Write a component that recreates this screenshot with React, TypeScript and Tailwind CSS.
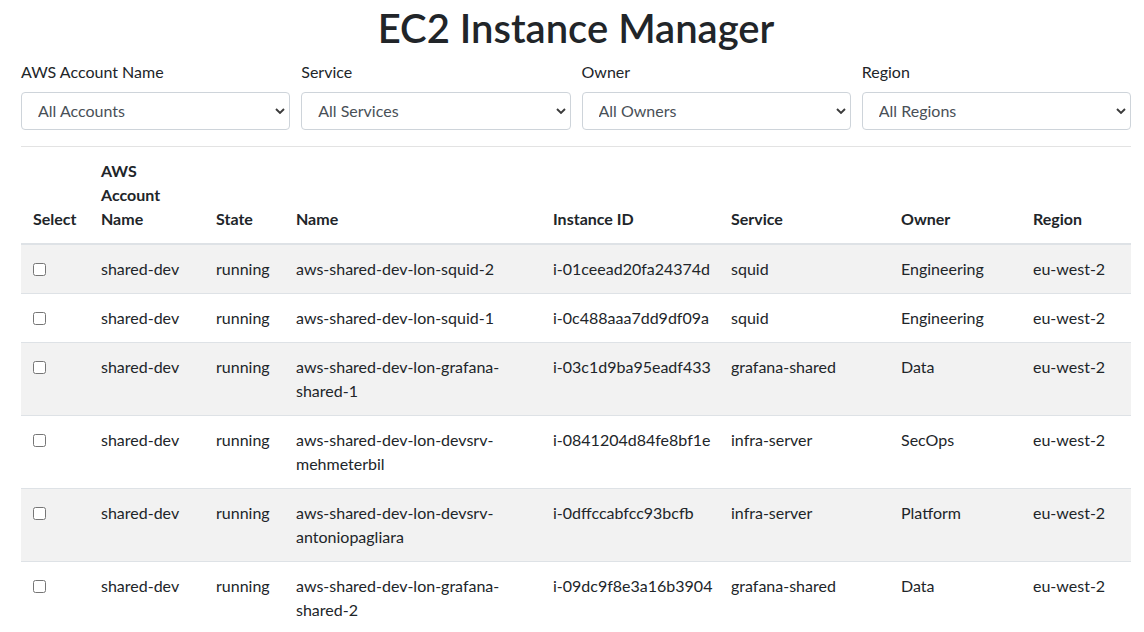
import React from "react";

type Row = {
  account: string;
  state: string;
  name: string[];
  id: string;
  service: string;
  owner: string;
  region: string;
};

const rows: Row[] = [
  { account: "shared-dev", state: "running", name: ["aws-shared-dev-lon-squid-2"], id: "i-01ceead20fa24374d", service: "squid", owner: "Engineering", region: "eu-west-2" },
  { account: "shared-dev", state: "running", name: ["aws-shared-dev-lon-squid-1"], id: "i-0c488aaa7dd9df09a", service: "squid", owner: "Engineering", region: "eu-west-2" },
  { account: "shared-dev", state: "running", name: ["aws-shared-dev-lon-grafana-", "shared-1"], id: "i-03c1d9ba95eadf433", service: "grafana-shared", owner: "Data", region: "eu-west-2" },
  { account: "shared-dev", state: "running", name: ["aws-shared-dev-lon-devsrv-", "mehmeterbil"], id: "i-0841204d84fe8bf1e", service: "infra-server", owner: "SecOps", region: "eu-west-2" },
  { account: "shared-dev", state: "running", name: ["aws-shared-dev-lon-devsrv-", "antoniopagliara"], id: "i-0dffccabfcc93bcfb", service: "infra-server", owner: "Platform", region: "eu-west-2" },
  { account: "shared-dev", state: "running", name: ["aws-shared-dev-lon-grafana-", "shared-2"], id: "i-09dc9f8e3a16b3904", service: "grafana-shared", owner: "Data", region: "eu-west-2" },
];

const filters = [
  { label: "AWS Account Name", value: "All Accounts" },
  { label: "Service", value: "All Services" },
  { label: "Owner", value: "All Owners" },
  { label: "Region", value: "All Regions" },
];

function Chevron() {
  return (
    <svg
      className="pointer-events-none absolute right-[5px] top-1/2 -translate-y-1/2"
      width="10"
      height="7"
      viewBox="0 0 10 7"
      fill="none"
    >
      <path d="M1 1.5l4 4 4-4" stroke="#3b3b3b" strokeWidth="1.9" />
    </svg>
  );
}

export default function App() {
  return (
    <div
      className="min-h-screen bg-white text-[#212529]"
      style={{ fontFamily: '"Lato", "Noto Sans", sans-serif' }}
    >
      <div className="w-[1110px] ml-[21px] pt-[4px]">
        <h1 className="text-center text-[40px] leading-[48px] font-semibold mb-2">
          EC2 Instance Manager
        </h1>

        <div className="grid grid-cols-4 gap-x-[11px]">
          {filters.map((f) => (
            <div key={f.label}>
              <label className="block text-[16px] leading-6 mb-2">{f.label}</label>
              <div className="relative">
                <select
                  className="block w-full h-[38px] appearance-none rounded-[4px] border border-[#ced4da] bg-white pl-4 pr-8 text-[16px] text-[#495057]"
                  defaultValue={f.value}
                >
                  <option>{f.value}</option>
                </select>
                <Chevron />
              </div>
            </div>
          ))}
        </div>

        <hr className="mt-4 border-0 border-t border-[#e3e3e3]" />

        <table className="w-full table-fixed border-collapse text-[16px] leading-6">
          <colgroup>
            <col className="w-[68px]" />
            <col className="w-[115px]" />
            <col className="w-[80px]" />
            <col className="w-[257px]" />
            <col className="w-[178px]" />
            <col className="w-[170px]" />
            <col className="w-[132px]" />
            <col className="w-[110px]" />
          </colgroup>
          <thead>
            <tr className="border-b-2 border-[#dee2e6] text-left align-bottom font-bold">
              <th className="px-3 py-3">Select</th>
              <th className="px-3 py-3">
                AWS
                <br />
                Account
                <br />
                Name
              </th>
              <th className="px-3 py-3">State</th>
              <th className="px-3 py-3">Name</th>
              <th className="px-3 py-3">Instance ID</th>
              <th className="px-3 py-3">Service</th>
              <th className="px-3 py-3">Owner</th>
              <th className="px-3 py-3">Region</th>
            </tr>
          </thead>
          <tbody>
            {rows.map((r, i) => (
              <tr
                key={r.id}
                className={`border-t border-[#dee2e6] align-top ${i % 2 === 0 ? "bg-[#f2f2f2]" : "bg-white"}`}
              >
                <td className="px-3 py-3">
                  <div className="flex h-6 items-center">
                    <input type="checkbox" className="m-0 h-[13px] w-[13px]" />
                  </div>
                </td>
                <td className="px-3 py-3 whitespace-nowrap">{r.account}</td>
                <td className="px-3 py-3 whitespace-nowrap">{r.state}</td>
                <td className="px-3 py-3 whitespace-nowrap">
                  {r.name.map((n, k) => (
                    <div key={k}>{n}</div>
                  ))}
                </td>
                <td className="px-3 py-3 whitespace-nowrap">{r.id}</td>
                <td className="px-3 py-3 whitespace-nowrap">{r.service}</td>
                <td className="px-3 py-3 whitespace-nowrap">{r.owner}</td>
                <td className="px-3 py-3 whitespace-nowrap">{r.region}</td>
              </tr>
            ))}
          </tbody>
        </table>
      </div>
    </div>
  );
}
